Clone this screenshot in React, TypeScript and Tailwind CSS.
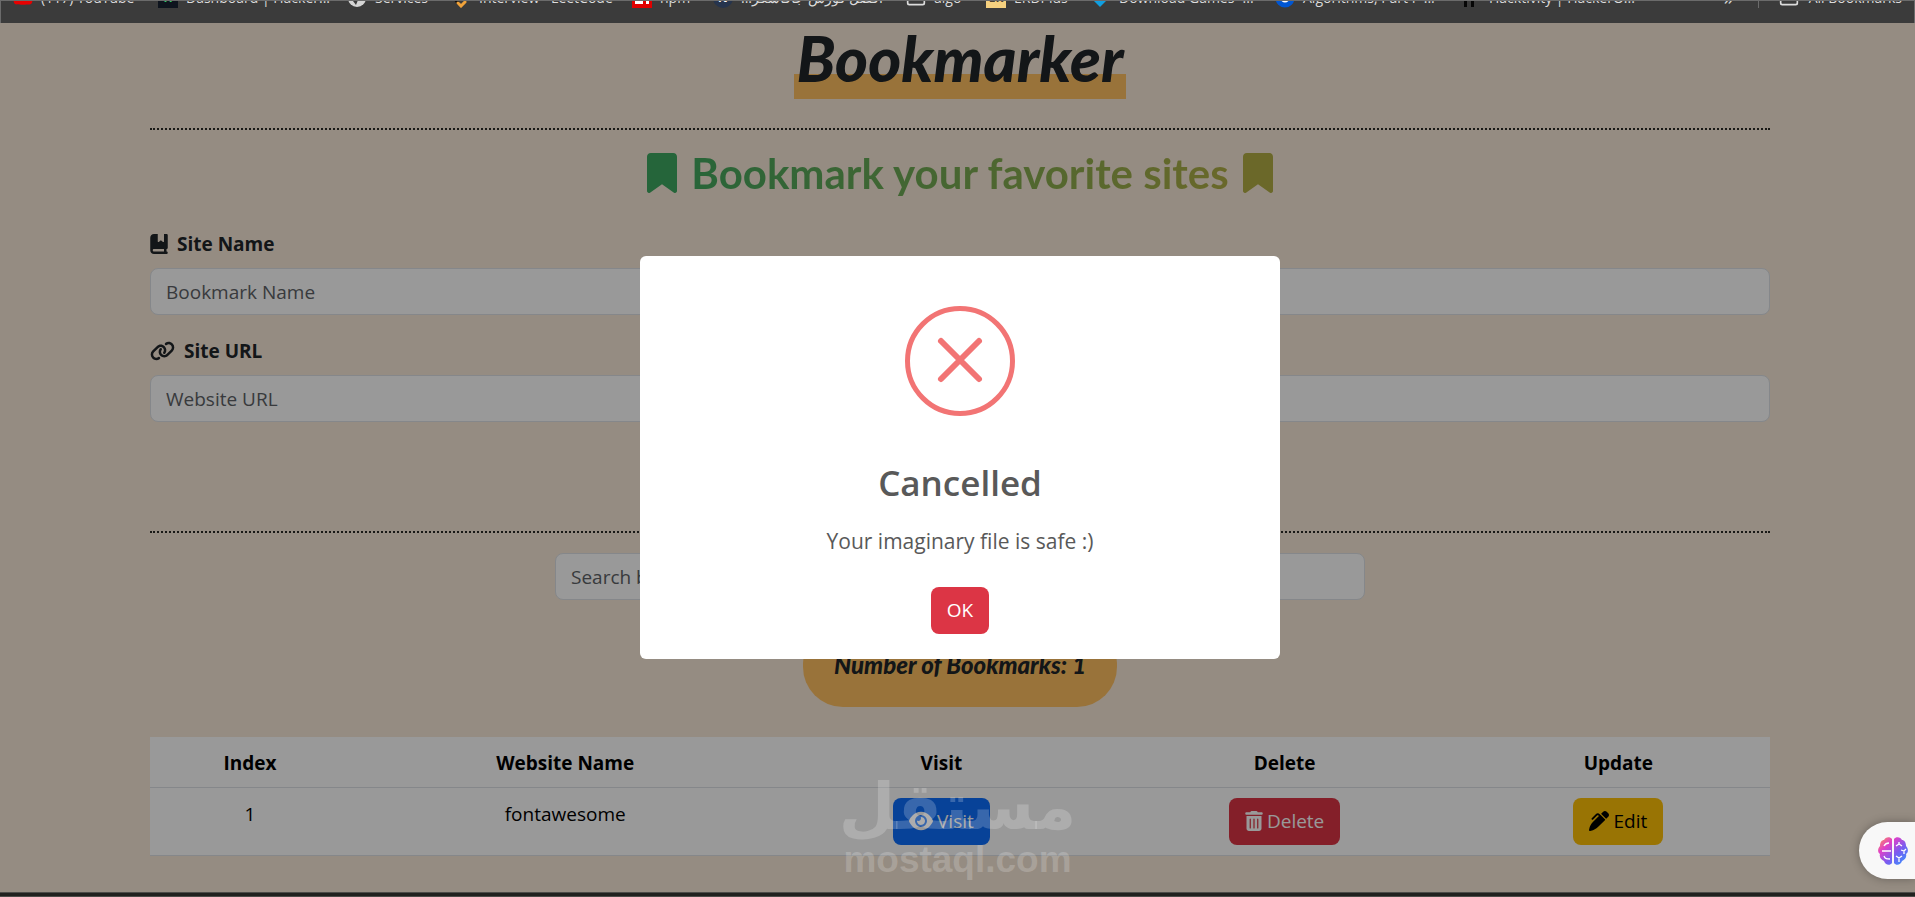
import type { ReactNode } from "react";
import { FaBookBookmark, FaBookmark, FaEye, FaLink, FaPenClip, FaTrashCan, FaYoutube } from "react-icons/fa6";
import { LuFolder } from "react-icons/lu";

type Shortcut = { label: string; width: string; icon: ReactNode };

const SHORTCUTS: Shortcut[] = [
  { label: "(117) YouTube", width: "w-[145px]", icon: <FaYoutube className="size-5 text-[#e60000]" /> },
  {
    label: "Dashboard | Hacker...",
    width: "w-[189px]",
    icon: <span className="size-5 bg-[#0e141e] text-[#2ec866] text-center text-xs font-bold leading-5">H</span>,
  },
  {
    label: "Services",
    width: "w-[104px]",
    icon: (
      <svg viewBox="0 0 20 20" className="size-5">
        <circle cx="10" cy="10" r="9" fill="#d5d5d5" />
        <path d="M5 6l5 3 1 3-2 5-3-4zM12 4l4 3-1 5-3-3z" fill="#3b3b3b" />
      </svg>
    ),
  },
  {
    label: "Interview - LeetCode",
    width: "w-[181px]",
    icon: (
      <svg viewBox="0 0 20 20" className="size-5" fill="none" strokeWidth="3" strokeLinecap="round">
        <path d="M10 4L4 11l3 4" stroke="#0b0b0b" />
        <path d="M7 15l3 3 4-4" stroke="#f0a23a" />
        <path d="M9 11h7" stroke="#a9a9a9" />
      </svg>
    ),
  },
  {
    label: "npm",
    width: "w-[81px]",
    icon: (
      <svg viewBox="0 0 20 20" className="size-5">
        <path fill="#e00000" d="M0 0h20v20H0z" />
        <path fill="#fff" d="M3 4h14v12h-3V8h-3v8H3z" />
      </svg>
    ),
  },
  {
    label: "أفضل كورس جافاسكر...",
    width: "w-[193px]",
    icon: <span className="size-5 rounded-full bg-[#26344d] text-white text-center text-xs font-bold leading-5">N</span>,
  },
  { label: "algo", width: "w-[80px]", icon: <LuFolder className="size-5" /> },
  {
    label: "ERDPlus",
    width: "w-[105px]",
    icon: <span className="size-5 bg-[#f5d07f] text-[#4b4030] text-center text-xs font-bold leading-5">ER</span>,
  },
  {
    label: "Download Games -...",
    width: "w-[184px]",
    icon: (
      <svg viewBox="0 0 20 20" className="size-5">
        <path fill="#109fe0" d="M2 12l8-10 6 10-7 7z" />
      </svg>
    ),
  },
  {
    label: "Algorithms, Part I -...",
    width: "w-[186px]",
    icon: (
      <svg viewBox="0 0 20 20" className="size-5">
        <circle cx="10" cy="10" r="7" fill="#fff" stroke="#0056d2" strokeWidth="5" />
      </svg>
    ),
  },
  {
    label: "Hacktivity | HackerO...",
    width: "w-[190px]",
    icon: (
      <svg viewBox="0 0 20 20" className="size-5">
        <path fill="#060606" d="M3 2h3v17H3zM10 2h3v17h-3z" />
      </svg>
    ),
  },
];

function BookmarksBar() {
  return (
    <nav className="h-[23px] overflow-hidden bg-[#3b3b3b] border-t border-x border-[#6b6b6b] text-[#dcdcdc] text-sm">
      <div className="flex items-center h-6 -mt-[15px] px-3 whitespace-nowrap">
        {SHORTCUTS.map((item) => (
          <a key={item.label} href="#" className={`${item.width} shrink-0 flex items-center gap-2`}>
            <span className="flex shrink-0">{item.icon}</span>
            <span dir="auto">{item.label}</span>
          </a>
        ))}
        <span className="ml-auto text-xl">»</span>
        <span className="w-px h-5 ml-6 mr-5 bg-[#6b6b6b]" />
        <a href="#" className="flex items-center gap-[10px]">
          <LuFolder className="size-5" />
          All Bookmarks
        </a>
      </div>
    </nav>
  );
}

const inputClass =
  "block w-full h-[47px] rounded-lg border border-[#dee2e6] bg-white px-[15px] text-[19px] text-[#212529] placeholder:text-[#5e6266]";

function BookmarkForm() {
  return (
    <form className="mt-8">
      <label htmlFor="siteName" className="flex items-center gap-[9px] h-[30px] mb-[9px] text-[19px] font-bold">
        <FaBookBookmark className="h-5 w-[18px]" />
        Site Name
      </label>
      <input id="siteName" type="text" placeholder="Bookmark Name" className={inputClass} />
      <label htmlFor="siteUrl" className="flex items-center gap-[9px] h-[30px] mt-[21px] mb-[9px] text-[19px] font-bold">
        <FaLink className="h-5 w-[25px]" />
        Site URL
      </label>
      <input id="siteUrl" type="text" placeholder="Website URL" className={inputClass} />
    </form>
  );
}

const btnClass = "inline-flex items-center gap-1 h-[47px] px-4 rounded-lg text-[19px]";

function BookmarkTable() {
  return (
    <table className="w-full mt-[30px] table-fixed bg-white text-black text-[19px] text-center">
      <colgroup>
        <col className="w-[12.35%]" />
        <col className="w-[26.56%]" />
        <col className="w-[19.89%]" />
        <col className="w-[22.48%]" />
        <col />
      </colgroup>
      <thead>
        <tr className="h-[50px] border-b border-[#dee2e6]">
          <th className="pt-0.5 font-bold">Index</th>
          <th className="pt-0.5 font-bold">Website Name</th>
          <th className="pt-0.5 font-bold">Visit</th>
          <th className="pt-0.5 font-bold">Delete</th>
          <th className="pt-0.5 font-bold">Update</th>
        </tr>
      </thead>
      <tbody>
        <tr className="h-[68px] border-b border-[#dee2e6] align-top">
          <td className="pt-3">1</td>
          <td className="pt-3">fontawesome</td>
          <td className="pt-[10px]">
            <button type="button" className={`${btnClass} bg-[#0d6efd] text-white`}>
              <FaEye className="size-6" />
              Visit
            </button>
          </td>
          <td className="pt-[10px]">
            <button type="button" className={`${btnClass} bg-[#dc3545] text-white`}>
              <FaTrashCan className="h-5 w-[18px]" />
              Delete
            </button>
          </td>
          <td className="pt-[10px]">
            <button type="button" className={`${btnClass} bg-[#ffc107] text-black`}>
              <FaPenClip className="size-5" />
              Edit
            </button>
          </td>
        </tr>
      </tbody>
    </table>
  );
}

function CancelledDialog() {
  return (
    <div className="absolute inset-0 flex items-center justify-center pl-[5px] bg-black/40">
      <div
        role="dialog"
        aria-labelledby="dialog-title"
        className="w-[640px] h-[403px] pt-[50px] flex flex-col items-center rounded-md bg-white text-[#595959]"
      >
        <svg viewBox="0 0 110 110" className="size-[110px]" fill="none" stroke="#f27474" strokeWidth="5">
          <circle cx="55" cy="55" r="52.5" />
          <path d="M36 35l38 38M74 35l-38 38" strokeWidth="6" strokeLinecap="round" />
        </svg>
        <h2 id="dialog-title" className="mt-10 text-[35px] leading-[54px] font-semibold">
          Cancelled
        </h2>
        <p className="mt-[15px] text-[21px] leading-8">Your imaginary file is safe :)</p>
        <button type="button" className="mt-[30px] h-[47px] w-[58px] rounded-lg bg-[#dc3545] text-white text-[19px]">
          OK
        </button>
      </div>
    </div>
  );
}

function Watermark() {
  return (
    <div className="absolute bottom-3 inset-x-0 flex flex-col items-center text-white/20 font-bold pointer-events-none select-none">
      <span dir="rtl" className="font-['DejaVu_Sans',sans-serif] text-[65px] leading-[66px]">
        مستقل
      </span>
      <span className="font-['Liberation_Sans',Arial,sans-serif] text-[37px] leading-10">mostaql.com</span>
    </div>
  );
}

function BrainButton() {
  return (
    <button
      type="button"
      aria-label="Assistant"
      className="absolute right-0 bottom-[13px] w-14 h-[57px] pl-[19px] rounded-l-full bg-[#f8f8f8] shadow-[0_0_10px_rgba(0,0,0,0.3)]"
    >
      <svg viewBox="0 0 30 28" className="w-[30px] h-7">
        <defs>
          <linearGradient id="brain" x1="0" y1="0" x2="1" y2="1">
            <stop offset="0" stopColor="#ff9a4d" />
            <stop offset="0.3" stopColor="#e040c8" />
            <stop offset="0.6" stopColor="#7a5cf0" />
            <stop offset="1" stopColor="#2f9bff" />
          </linearGradient>
        </defs>
        <path
          fill="url(#brain)"
          d="M14 2v24c-2 3-7 2-8-2-3-1-5-4-4-7-3-2-2-6 0-8 0-4 2-6 4-6 1-3 6-4 8-1zM16 2v24c2 3 7 2 8-2 3-1 5-4 4-7 3-2 2-6 0-8 0-4-2-6-4-6-1-3-6-4-8-1z"
        />
        <path
          d="M6 9c1-2 3-3 5-3M4 14h9M6 19c1 3 3 3 6 3M18 9l3-2M21 5v2l3 2M23 13l3 1 2-2M26 14v3M18 19l3 2 3-2M21 21v4"
          fill="none"
          stroke="#fff"
          strokeWidth="1.3"
        />
      </svg>
    </button>
  );
}

export default function App() {
  return (
    <div className="min-h-screen flex flex-col bg-[#f8e9d9] font-['Open_Sans','Noto_Sans',sans-serif] text-[#212529]">
      <BookmarksBar />

      <main className="relative flex-1 pl-[150px] pr-[145px] pb-[36px]">
        <h1 className="w-fit h-[76px] mx-auto px-[3px] font-['Lato',cursive] font-black italic text-[63px] leading-[70px] bg-[linear-gradient(transparent_51px,#ffc061_51px)]">
          Bookmarker
        </h1>
        <hr className="mt-[29px] border-t-2 border-dotted border-[#2b2b26]" />

        <h2 className="mt-[19px] h-12 flex items-center justify-center gap-[14px] font-['Lato',sans-serif] font-bold text-[42px]">
          <FaBookmark className="h-10 w-[30px] text-[#3fa861]" />
          <span className="bg-[linear-gradient(90deg,#43a85f,#b0ae46)] bg-clip-text text-transparent">
            Bookmark your favorite sites
          </span>
          <FaBookmark className="h-10 w-[30px] text-[#b3ae45]" />
        </h2>

        <BookmarkForm />

        <hr className="mt-[109px] border-t-2 border-dotted border-[#2b2b26]" />
        <div className="w-1/2 mx-auto mt-5">
          <input type="search" aria-label="Search" placeholder="Search by name" className={inputClass} />
        </div>

        <p className="w-fit h-[84px] mx-auto mt-[23px] px-[31px] rounded-[40px] bg-[#ffc061] font-['Lato',cursive] font-black italic text-2xl leading-[84px]">
          Number of Bookmarks: 1
        </p>

        <BookmarkTable />

        <CancelledDialog />
        <Watermark />
        <BrainButton />
      </main>

      <footer className="h-[5px] bg-[#20211f] border-y border-[#4c4c49]" />
    </div>
  );
}
